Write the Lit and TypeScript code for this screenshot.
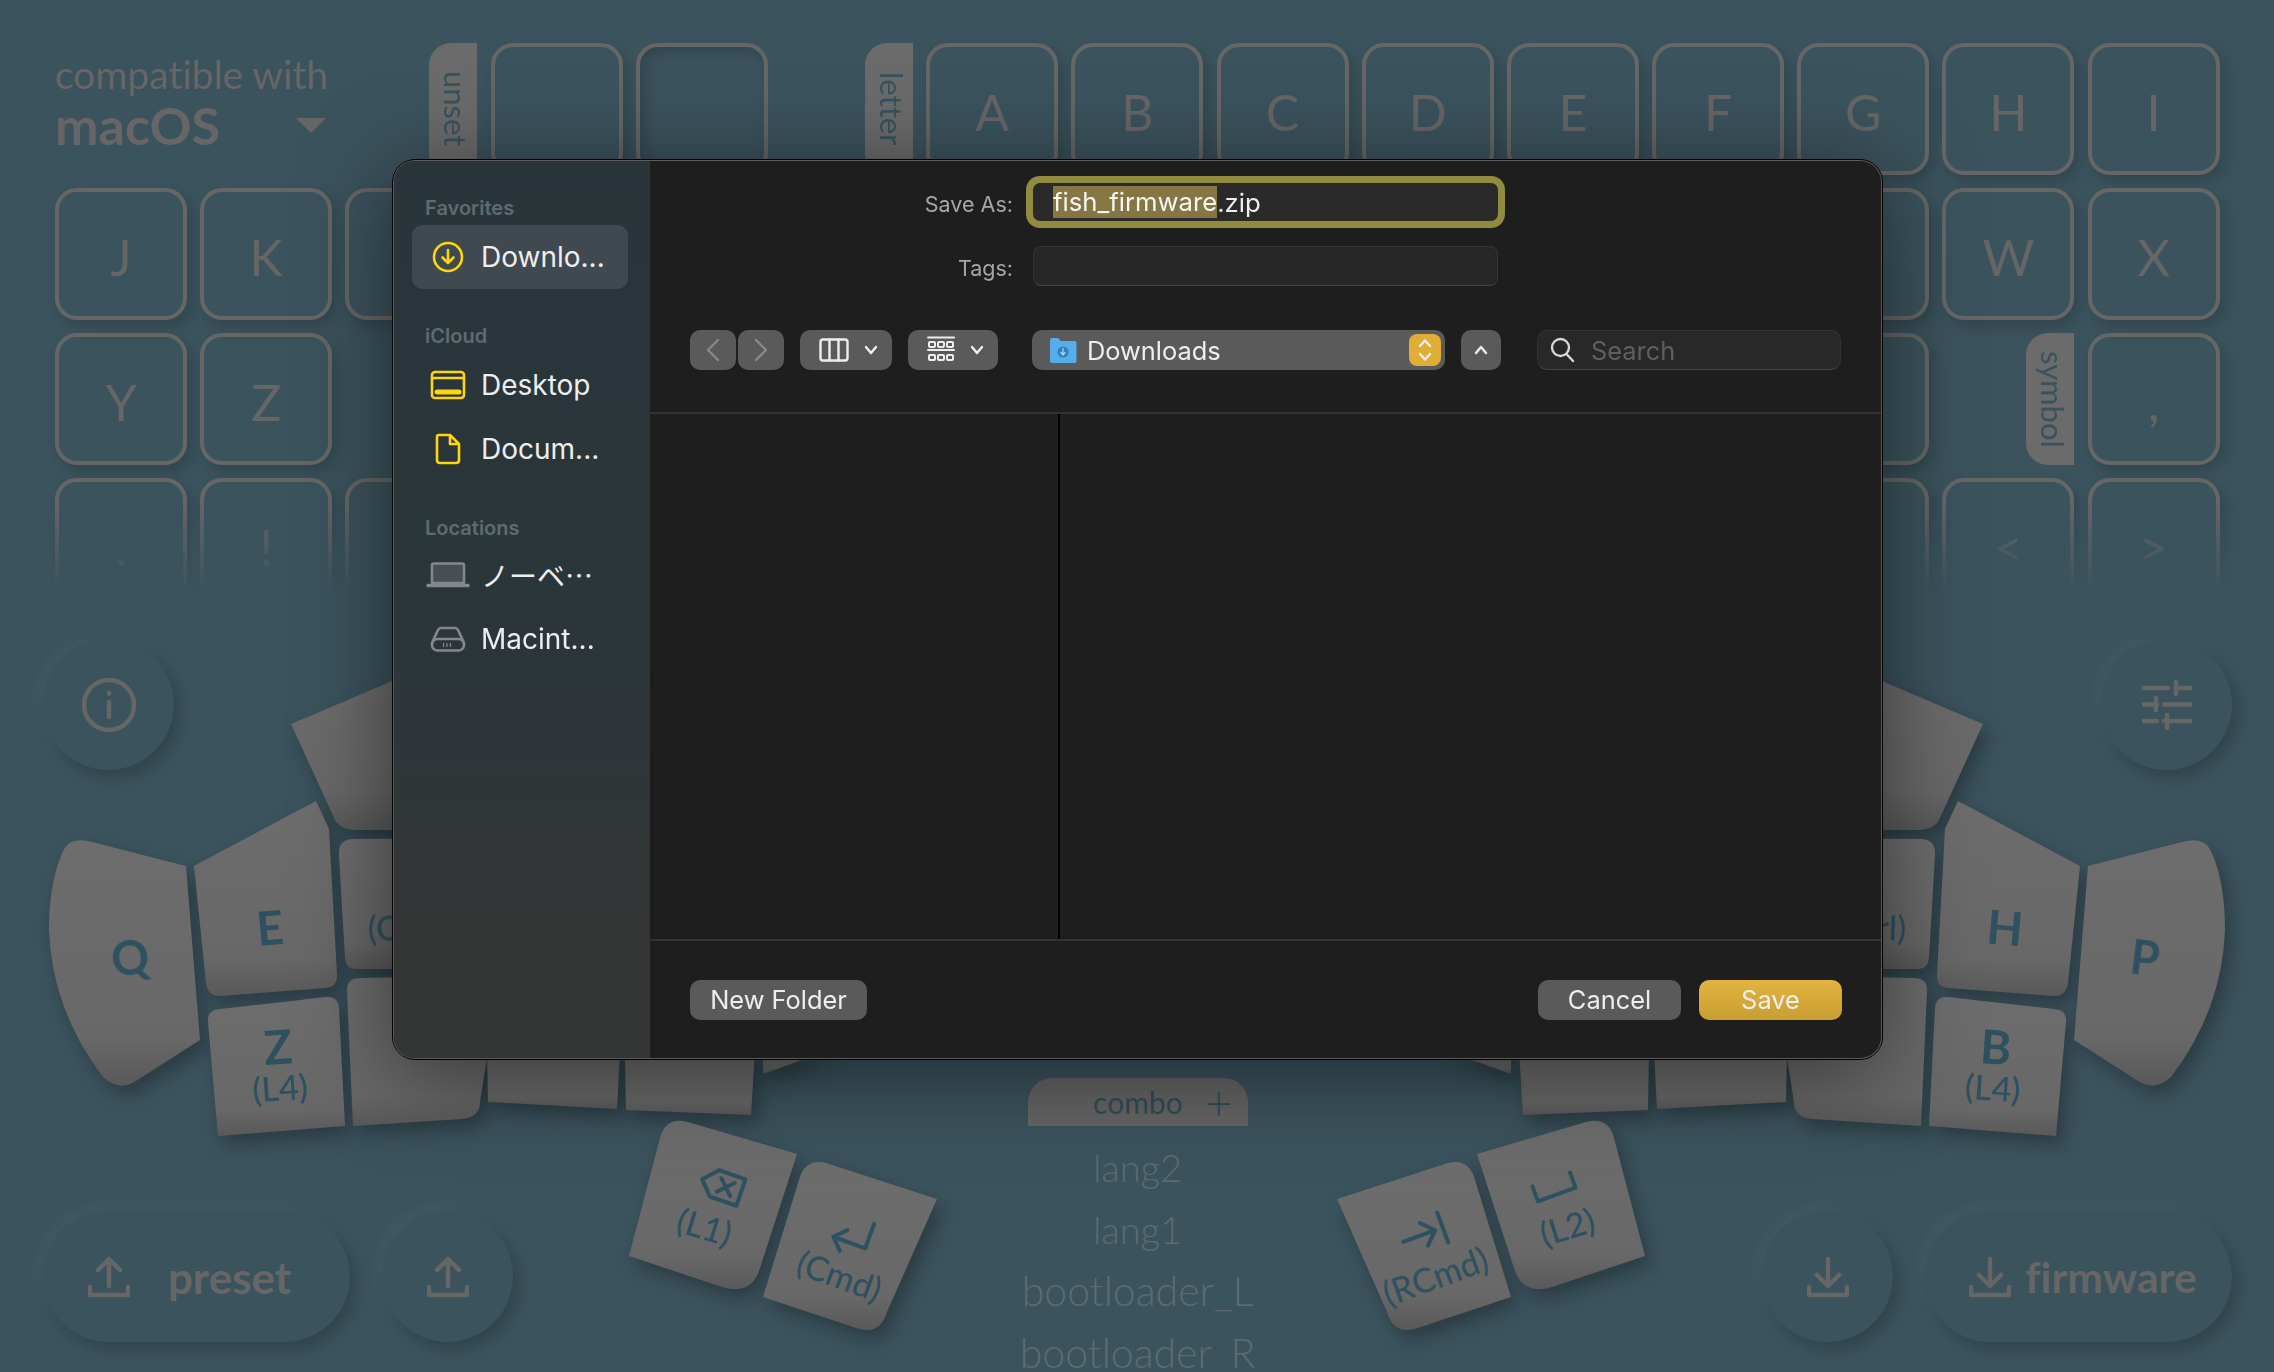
import { LitElement, css, html, svg, nothing } from "lit";
import { customElement } from "lit/decorators.js";

type Cell =
  | { t: "key"; label?: string; inset?: boolean }
  | { t: "tab"; label: string }
  | { t: "gap" }
  | { t: "compat" };

const key = (label = ""): Cell => ({ t: "key", label });
const gap = (n: number): Cell[] => Array.from({ length: n }, () => ({ t: "gap" }));
const blank = (n: number): Cell[] => Array.from({ length: n }, () => key());

// keys in columns 2-12 of the lower rows sit behind the save dialog, so they carry no label
const CELLS: Cell[] = [
  { t: "compat" },
  { t: "tab", label: "unset" },
  key(),
  { t: "key", inset: true },
  { t: "tab", label: "letter" },
  ..."ABCDEFGHI".split("").map((l) => key(l)),
  key("J"),
  key("K"),
  ...blank(11),
  key("W"),
  key("X"),
  key("Y"),
  key("Z"),
  ...gap(10),
  key(),
  { t: "tab", label: "symbol" },
  key(","),
  key("."),
  key("!"),
  key(),
  ...gap(9),
  key(),
  key("<"),
  key(">"),
];

const SHAPES = svg`
  <path d="M186 866 L200 1040 L136 1081 Q119 1092 103 1077 Q52 1010 49 930 Q49 882 63 851 Q70 836 92 842 Z" />
  <path d="M194 866 L316 801 L329 829 L337 975 Q338 987 326 988 L221 996 Q208 997 206 983 Z" />
  <path d="M208 1022 Q207 1010 220 1009 L326 997 Q338 996 339 1008 L345 1126 L218 1136 Z" />
  <path d="M339 855 Q338 840 352 839 L520 838 L520 969 L355 969 Q346 969 345 958 Z" />
  <path d="M347 992 Q346 978 360 978 L500 975 L480 1102 Q480 1117 462 1119 L353 1126 Z" />
  <path d="M291 724 L500 635 L500 830 L355 830 Q343 830 336 822 Z" />
  <path d="M487 1050 L488 1102 L617 1109 L620 1050 Z" />
  <path d="M625 1050 L626 1110 L751 1115 L755 1050 Z" />
  <path d="M763 1050 L763 1074 L830 1050 Z" />
  <path d="M797 1154 L688 1122 Q666 1116 660 1138 L629 1256 L722 1287 Q752 1296 760 1268 Z" />
  <path d="M937 1199 L826 1163 Q805 1158 799 1180 L763 1297 L856 1328 Q880 1336 887 1312 Z" />
`;

const trayUp = html`<svg class="tray" viewBox="0 0 42 42">
  <path d="M2 31 V39 H40 V31 M21 30 V3 M10 14 L21 3 L32 14" />
</svg>`;
const trayDown = html`<svg class="tray" viewBox="0 0 42 42">
  <path d="M2 31 V39 H40 V31 M21 3 V30 M10 19 L21 30 L32 19" />
</svg>`;

@customElement("app-root")
export class AppRoot extends LitElement {
  static styles = css`
    :host {
      display: block;
      position: relative;
      width: 2274px;
      height: 1372px;
      overflow: hidden;
      background: #3b535d;
      font-family: Lato, "Noto Sans", sans-serif;
      font-variant-ligatures: none;
      color: #666;
    }
    .keyboard {
      display: grid;
      grid-template-columns: repeat(15, 132px);
      grid-auto-rows: 132px;
      column-gap: 13.2px;
      row-gap: 13px;
      box-sizing: border-box;
      height: 593px;
      padding: 43px 0 0 55px;
      overflow: hidden;
      -webkit-mask-image: linear-gradient(#000 500px, transparent 592px);
      mask-image: linear-gradient(#000 500px, transparent 592px);
    }
    .key {
      box-sizing: border-box;
      display: flex;
      align-items: center;
      justify-content: center;
      border: 4.5px solid #666;
      border-radius: 22px;
      box-shadow: 5px 7px 14px rgba(0, 0, 0, 0.16);
      font-size: 50px;
      font-weight: 400;
      padding-top: 6px;
    }
    .key.inset {
      box-shadow: inset 5px 6px 12px rgba(0, 0, 0, 0.16);
    }
    .tab {
      justify-self: end;
      box-sizing: border-box;
      width: 48px;
      padding-left: 6px;
      display: flex;
      align-items: center;
      justify-content: center;
      background: #6b6b6b;
      color: #38525e;
      border-radius: 22px 0 0 22px;
      writing-mode: vertical-rl;
      font-size: 31px;
    }
    .compat {
      grid-column: span 2;
      display: flex;
      flex-direction: column;
      padding-top: 7px;
    }
    .compat small {
      font-size: 39px;
      line-height: 48px;
    }
    .os {
      display: flex;
      justify-content: space-between;
      align-items: center;
      font-size: 52px;
      font-weight: 700;
      line-height: 54px;
    }
    .caret {
      width: 0;
      height: 0;
      border-left: 15px solid transparent;
      border-right: 15px solid transparent;
      border-top: 15px solid #666;
      margin-right: 6px;
    }
    .lower {
      display: grid;
      grid-template-columns: 1fr 220px 1fr;
      box-sizing: border-box;
      height: 733px;
      margin-top: 46px;
      padding: 0 42px 0 43px;
      overflow: hidden;
    }
    .side {
      display: flex;
      flex-direction: column;
      justify-content: space-between;
      height: 703px;
    }
    .side.right {
      align-items: flex-end;
    }
    .bottom {
      display: flex;
      gap: 32px;
    }
    .round,
    .pill {
      box-sizing: border-box;
      height: 131px;
      display: flex;
      align-items: center;
      justify-content: center;
      background: #3b535d;
      border-radius: 66px;
      box-shadow: 6px 8px 14px rgba(0, 0, 0, 0.18), -6px -6px 14px rgba(255, 255, 255, 0.035);
    }
    .round {
      width: 131px;
    }
    .pill {
      width: 307px;
      gap: 14px;
      font-size: 44px;
      font-weight: 700;
    }
    .pill.preset {
      gap: 38px;
      padding-right: 14px;
    }
    .pill.firmware {
      font-size: 42.7px;
      padding-left: 9px;
    }
    .tray {
      width: 42px;
      height: 42px;
      fill: none;
      stroke: #666;
      stroke-width: 4.5;
      stroke-linecap: round;
      stroke-linejoin: round;
    }
    .glyph {
      fill: none;
      stroke: #666;
      stroke-width: 4.5;
      stroke-linecap: round;
    }
    .info {
      width: 54px;
      height: 60px;
    }
    .sliders {
      width: 50px;
      height: 50px;
    }
    .combos {
      padding-top: 439px;
      display: flex;
      flex-direction: column;
      align-items: center;
    }
    .combo-tab {
      box-sizing: border-box;
      width: 220px;
      height: 48px;
      flex: none;
      display: flex;
      align-items: center;
      justify-content: flex-end;
      gap: 22px;
      padding-right: 15px;
      border-radius: 24px 24px 0 0;
      background: #656565;
      color: #2f4d59;
      font-size: 30px;
      margin-bottom: 10px;
    }
    .combo-tab b {
      font-weight: 300;
      font-size: 48px;
      line-height: 44px;
    }
    .item {
      flex: none;
      height: 62px;
      line-height: 62px;
      font-size: 38px;
      font-weight: 300;
      color: #5d6b70;
      white-space: nowrap;
    }
    .item.long {
      font-size: 41px;
    }
    .cluster {
      position: absolute;
      inset: 0;
      width: 2274px;
      height: 1372px;
      pointer-events: none;
    }
    .shapes {
      fill: url(#cap);
    }
    .shadowed {
      filter: drop-shadow(6px 9px 9px rgba(0, 0, 0, 0.28));
    }
    .cap-text {
      fill: #2e5160;
      font-family: Lato, sans-serif;
      text-anchor: middle;
      dominant-baseline: central;
    }
    .cap-text.big {
      font-size: 47px;
      font-weight: 700;
    }
    .cap-text.mid {
      font-size: 34px;
      font-weight: 500;
    }
    .cap-icon {
      fill: none;
      stroke: #2e5160;
      stroke-width: 4;
      stroke-linecap: round;
      stroke-linejoin: round;
    }

    .dialog {
      position: absolute;
      left: 393px;
      top: 160px;
      width: 1489px;
      height: 899px;
      box-sizing: border-box;
      display: flex;
      overflow: hidden;
      border-radius: 22px;
      border: 1px solid #5c5c5c;
      outline: 1px solid #000;
      background: #1e1e1e;
      font-family: Inter, Roboto, "Noto Sans CJK JP", sans-serif;
    }
    .dialog-shadow {
      position: absolute;
      left: 392px;
      top: 159px;
      width: 1490px;
      height: 900px;
      border-radius: 22px;
      box-shadow: 0 14px 90px rgba(0, 0, 0, 0.5);
    }
    .sidebar {
      width: 256px;
      flex: none;
      box-sizing: border-box;
      padding: 33px 22px 0 18px;
      background: linear-gradient(#29353a 0%, #2b363b 50%, #343535 88%);
      color: #eee;
    }
    .sidebar h4 {
      margin: 0;
      padding-left: 13px;
      height: 31px;
      line-height: 28px;
      font-size: 20px;
      font-weight: 600;
      color: #5e6b70;
    }
    .sidebar h4.second {
      margin-top: 33px;
    }
    .sidebar h4.third {
      margin-top: 33px;
      height: 29px;
    }
    .row {
      display: flex;
      align-items: center;
      height: 64px;
      font-size: 28px;
      white-space: nowrap;
    }
    .row.sel {
      background: #40494f;
      border-radius: 11px;
    }
    .row .ico {
      box-sizing: border-box;
      width: 69px;
      padding-left: 3px;
      flex: none;
      display: flex;
      justify-content: center;
    }
    .row svg {
      fill: none;
      stroke: #ffd60a;
      stroke-width: 2.6;
      stroke-linejoin: round;
      stroke-linecap: round;
    }
    .row svg.gray {
      stroke: #85888a;
    }
    .main {
      flex: 1;
      min-width: 0;
      display: flex;
      flex-direction: column;
    }
    .head {
      box-sizing: border-box;
      height: 253px;
      flex: none;
      padding-top: 22px;
      border-bottom: 2px solid #333;
    }
    .form {
      display: grid;
      grid-template-columns: 363px 465px;
      column-gap: 20px;
      row-gap: 25px;
      grid-template-rows: 38px 40px;
      align-items: center;
    }
    .form label {
      justify-self: end;
      padding-top: 3px;
      font-size: 21.5px;
      color: #a6a6a6;
    }
    .field {
      box-sizing: border-box;
      height: 100%;
      background: #272727;
      border: 1px solid #343434;
      border-bottom-color: #444;
      border-radius: 8px;
    }
    .field.focus {
      display: flex;
      align-items: center;
      padding-left: 20px;
      background: #2a2a2a;
      border: 0;
      box-shadow: 0 0 0 7px #918b3f;
      color: #eee;
      font-size: 25.7px;
      border-radius: 7px;
    }
    .field.focus mark {
      background: #857644;
      color: #f5f5f5;
      height: 32px;
      line-height: 32px;
    }
    .tools {
      display: flex;
      align-items: center;
      margin: 44px 0 0 40px;
      height: 40px;
    }
    .btn {
      box-sizing: border-box;
      height: 40px;
      flex: none;
      display: flex;
      align-items: center;
      justify-content: center;
      background: #5a5a5a;
      border-radius: 10px;
      color: #eee;
      font-size: 25.4px;
    }
    .btn svg {
      fill: none;
      stroke: #eee;
      stroke-width: 2.4;
      stroke-linecap: round;
      stroke-linejoin: round;
    }
    .btn svg.dim {
      stroke: #8a8a8a;
    }
    .nav {
      width: 46px;
      margin-right: 2px;
    }
    .view {
      justify-content: flex-start;
      padding-left: 19px;
      gap: 15px;
      margin-left: 14px;
    }
    .view.col {
      width: 92px;
    }
    .view.grp {
      width: 90px;
      margin-left: 16px;
    }
    .view.grp svg.rows {
      stroke-width: 2;
    }
    .popup {
      width: 413px;
      margin-left: 34px;
      justify-content: flex-start;
      padding: 0 4px 0 17px;
    }
    .popup span {
      margin-left: 10px;
      flex: 1;
    }
    .btn svg.folder {
      stroke: none;
    }
    .folder .badge {
      stroke: #9fd3f5;
      stroke-width: 1.3;
    }
    .stepper {
      width: 32px;
      height: 32px;
      border-radius: 8px;
      background: #e0ad37;
      display: flex;
      align-items: center;
      justify-content: center;
    }
    .up {
      width: 40px;
      margin-left: 16px;
    }
    .search {
      box-sizing: border-box;
      width: 304px;
      height: 40px;
      margin-left: 36px;
      display: flex;
      align-items: center;
      gap: 15px;
      padding-left: 12px;
      background: #282828;
      border: 1px solid #333;
      border-bottom-color: #474747;
      border-radius: 10px;
      color: #5f5f5f;
      font-size: 25.4px;
    }
    .search svg {
      fill: none;
      stroke: #d6d6d6;
      stroke-width: 2.4;
      stroke-linecap: round;
    }
    .panes {
      flex: 1;
      display: flex;
    }
    .pane-one {
      width: 408px;
      border-right: 2px solid #000;
    }
    .foot {
      box-sizing: border-box;
      height: 119px;
      flex: none;
      display: flex;
      align-items: center;
      gap: 18px;
      padding: 0 39px 0 40px;
      border-top: 2px solid #333;
    }
    .foot .spacer {
      flex: 1;
    }
    .foot .wide {
      width: 177px;
    }
    .foot .act {
      width: 143px;
    }
    .foot .save {
      background: linear-gradient(#e3b33f, #c89e33);
    }
  `;

  private renderCell(c: Cell) {
    switch (c.t) {
      case "compat":
        return html`<div class="compat">
          <small>compatible with</small>
          <div class="os">macOS <i class="caret"></i></div>
        </div>`;
      case "tab":
        return html`<div class="tab">${c.label}</div>`;
      case "gap":
        return html`<div></div>`;
      default:
        return html`<div class="key ${c.inset ? "inset" : ""}">${c.label || nothing}</div>`;
    }
  }

  private capText(x: number, y: number, a: number, cls: string, label: string) {
    return svg`<text class="cap-text ${cls}" x=${x} y=${y} transform="rotate(${a} ${x} ${y})">${label}</text>`;
  }

  private renderCluster() {
    return html`<svg class="cluster" viewBox="0 0 2274 1372">
      <defs>
        <linearGradient id="cap" x1="0" y1="0" x2="0" y2="1">
          <stop offset="0" stop-color="#6d6d6d" />
          <stop offset="0.8" stop-color="#686868" />
          <stop offset="1" stop-color="#595959" />
        </linearGradient>
      </defs>
      <g class="shadowed">
        <g class="shapes">${SHAPES}</g>
        <g class="shapes" transform="matrix(-1 0 0 1 2274 0)">${SHAPES}</g>
      </g>
      ${this.capText(130, 957, -7, "big", "Q")}
      ${this.capText(270, 927, -5, "big", "E")}
      ${this.capText(278, 1046, -4, "big", "Z")}
      ${this.capText(280, 1087, -4, "mid", "(L4)")}
      ${this.capText(404, 926, -2, "mid", "(Ctrl)")}
      ${this.capText(1870, 926, 2, "mid", "(Ctrl)")}
      ${this.capText(2005, 927, 5, "big", "H")}
      ${this.capText(2145, 957, 7, "big", "P")}
      ${this.capText(1996, 1046, 4, "big", "B")}
      ${this.capText(1993, 1087, 4, "mid", "(L4)")}
      ${this.capText(705, 1226, 17, "mid", "(L1)")}
      ${this.capText(840, 1275, 20, "mid", "(Cmd)")}
      ${this.capText(1435, 1275, -20, "mid", "(RCmd)")}
      ${this.capText(1567, 1226, -17, "mid", "(L2)")}
      <g class="cap-icon" transform="translate(722 1186) rotate(19)">
        <path d="M-21 0 L-8 -14 L20 -14 L20 14 L-8 14 Z M-3 -7 L11 7 M11 -7 L-3 7" />
      </g>
      <g class="cap-icon" transform="translate(852 1235) rotate(20)">
        <path d="M17 -18 L17 8 L-16 8 M-6 -3 L-17 8 L-6 19" />
      </g>
      <g class="cap-icon" transform="translate(1422 1235) rotate(-20)">
        <path d="M-20 0 L14 0 M2 -12 L14 0 L2 12 M22 -16 L22 16" />
      </g>
      <g class="cap-icon" transform="translate(1554 1187) rotate(-20)">
        <path d="M-20 -8 L-20 8 L20 8 L20 -8" />
      </g>
    </svg>`;
  }

  private renderSidebar() {
    return html`<aside class="sidebar">
      <h4>Favorites</h4>
      <div class="row sel">
        <span class="ico"
          ><svg width="32" height="32" viewBox="0 0 32 32">
            <circle cx="16" cy="16" r="14" />
            <path d="M16 9 V22 M10.5 16.5 L16 22 L21.5 16.5" /></svg
        ></span>
        Downlo...
      </div>
      <h4 class="second">iCloud</h4>
      <div class="row">
        <span class="ico"
          ><svg width="36" height="30" viewBox="0 0 36 30">
            <rect x="2" y="2" width="32" height="26" rx="3" />
            <path d="M2 8 H34" />
            <path d="M7 22 H29" stroke-width="5" /></svg
        ></span>
        Desktop
      </div>
      <div class="row">
        <span class="ico"
          ><svg width="26" height="32" viewBox="0 0 26 32">
            <path d="M4 2 H15 L24 11 V27 Q24 30 21 30 H5 Q2 30 2 27 V4 Q2 2 4 2 Z M15 2 V11 H24" /></svg
        ></span>
        Docum...
      </div>
      <h4 class="third">Locations</h4>
      <div class="row">
        <span class="ico"
          ><svg class="gray" width="44" height="26" viewBox="0 0 44 26">
            <path d="M6 21 V3 Q6 1.5 8 1.5 H36 Q38 1.5 38 3 V21 Z" fill="#484e52" />
            <path d="M2 23.5 H42" stroke-width="3.5" /></svg
        ></span>
        ノーベ⋯
      </div>
      <div class="row">
        <span class="ico"
          ><svg class="gray" width="36" height="26" viewBox="0 0 36 26">
            <path d="M2 17 L8 4 Q9 2 11 2 H25 Q27 2 28 4 L34 17" />
            <rect x="2" y="13" width="32" height="11.5" rx="5.5" />
            <path d="M13 19 H23" stroke-dasharray="1.2 2.2" stroke-linecap="butt" stroke-width="4" /></svg
        ></span>
        Macint...
      </div>
    </aside>`;
  }

  private renderToolbar() {
    const chevron = html`<svg width="14" height="10" viewBox="0 0 14 10"><path d="M2 2 L7 8 L12 2" /></svg>`;
    return html`<div class="tools">
      <div class="btn nav">
        <svg class="dim" width="14" height="24" viewBox="0 0 14 24"><path d="M12 2 L2 12 L12 22" /></svg>
      </div>
      <div class="btn nav">
        <svg class="dim" width="14" height="24" viewBox="0 0 14 24"><path d="M2 2 L12 12 L2 22" /></svg>
      </div>
      <div class="btn view col">
        <svg width="30" height="24" viewBox="0 0 30 24">
          <rect x="1.5" y="1.5" width="27" height="21" rx="2.5" />
          <path d="M10.5 1.5 V22.5 M19.5 1.5 V22.5" />
        </svg>
        ${chevron}
      </div>
      <div class="btn view grp">
        <svg class="rows" width="28" height="28" viewBox="0 0 28 28">
          <path d="M1 1.5 H27 M1 14 H27" />
          <rect x="2" y="6" width="6" height="5" rx="1" />
          <rect x="11" y="6" width="6" height="5" rx="1" />
          <rect x="20" y="6" width="6" height="5" rx="1" />
          <rect x="2" y="19" width="6" height="5" rx="1" />
          <rect x="11" y="19" width="6" height="5" rx="1" />
          <rect x="20" y="19" width="6" height="5" rx="1" />
        </svg>
        ${chevron}
      </div>
      <div class="btn popup">
        <svg class="folder" width="28" height="26" viewBox="0 0 28 26">
          <path d="M1 3 Q1 1 3 1 H9 L12 4 H26 Q27.5 4 27.5 6 V24 Q27.5 26 26 26 H3 Q1 26 1 24 Z" fill="#55ade9" />
          <circle cx="14" cy="15" r="5.5" fill="#2f7fb8" />
          <path class="badge" d="M14 11.5 V17.5 M11.8 15.5 L14 18 L16.2 15.5" />
        </svg>
        <span>Downloads</span>
        <div class="stepper">
          <svg width="16" height="26" viewBox="0 0 16 26">
            <path d="M3 9 L8 3.5 L13 9 M3 17 L8 22.5 L13 17" />
          </svg>
        </div>
      </div>
      <div class="btn up">
        <svg width="14" height="10" viewBox="0 0 14 10"><path d="M2 8 L7 2 L12 8" /></svg>
      </div>
      <div class="search">
        <svg width="26" height="26" viewBox="0 0 26 26">
          <circle cx="10.5" cy="10.5" r="8.5" />
          <path d="M16.5 17 L23 24" />
        </svg>
        Search
      </div>
    </div>`;
  }

  private renderDialog() {
    return html`<div class="dialog-shadow"></div>
      <div class="dialog">
        ${this.renderSidebar()}
        <div class="main">
          <div class="head">
            <div class="form">
              <label>Save As:</label>
              <div class="field focus"><mark>fish_firmware</mark>.zip</div>
              <label>Tags:</label>
              <div class="field"></div>
            </div>
            ${this.renderToolbar()}
          </div>
          <div class="panes"><div class="pane-one"></div></div>
          <div class="foot">
            <div class="btn wide">New Folder</div>
            <div class="spacer"></div>
            <div class="btn act">Cancel</div>
            <div class="btn act save">Save</div>
          </div>
        </div>
      </div>`;
  }

  render() {
    return html`
      <div class="keyboard">${CELLS.map((c) => this.renderCell(c))}</div>
      <div class="lower">
        <div class="side">
          <div class="round">
            <svg class="glyph info" viewBox="0 0 54 60">
              <ellipse cx="27" cy="30" rx="25" ry="25" />
              <path d="M27 27 V42 M27 18 V18.5" />
            </svg>
          </div>
          <div class="bottom">
            <div class="pill preset">${trayUp}<span>preset</span></div>
            <div class="round">${trayUp}</div>
          </div>
        </div>
        <div class="combos">
          <div class="combo-tab"><span>combo</span><b>+</b></div>
          <span class="item">lang2</span>
          <span class="item">lang1</span>
          <span class="item long">bootloader_L</span>
          <span class="item long">bootloader_R</span>
        </div>
        <div class="side right">
          <div class="round">
            <svg class="glyph sliders" viewBox="0 0 50 50">
              <path d="M1 8 H26 M34 8 H49 M34 2 V14 M1 24.5 H15 M22 24.5 H49 M14 18 V30 M1 41 H15 M22 41 H49 M25 35 V48" />
            </svg>
          </div>
          <div class="bottom">
            <div class="round">${trayDown}</div>
            <div class="pill firmware">${trayDown}<span>firmware</span></div>
          </div>
        </div>
      </div>
      ${this.renderCluster()} ${this.renderDialog()}
    `;
  }
}
